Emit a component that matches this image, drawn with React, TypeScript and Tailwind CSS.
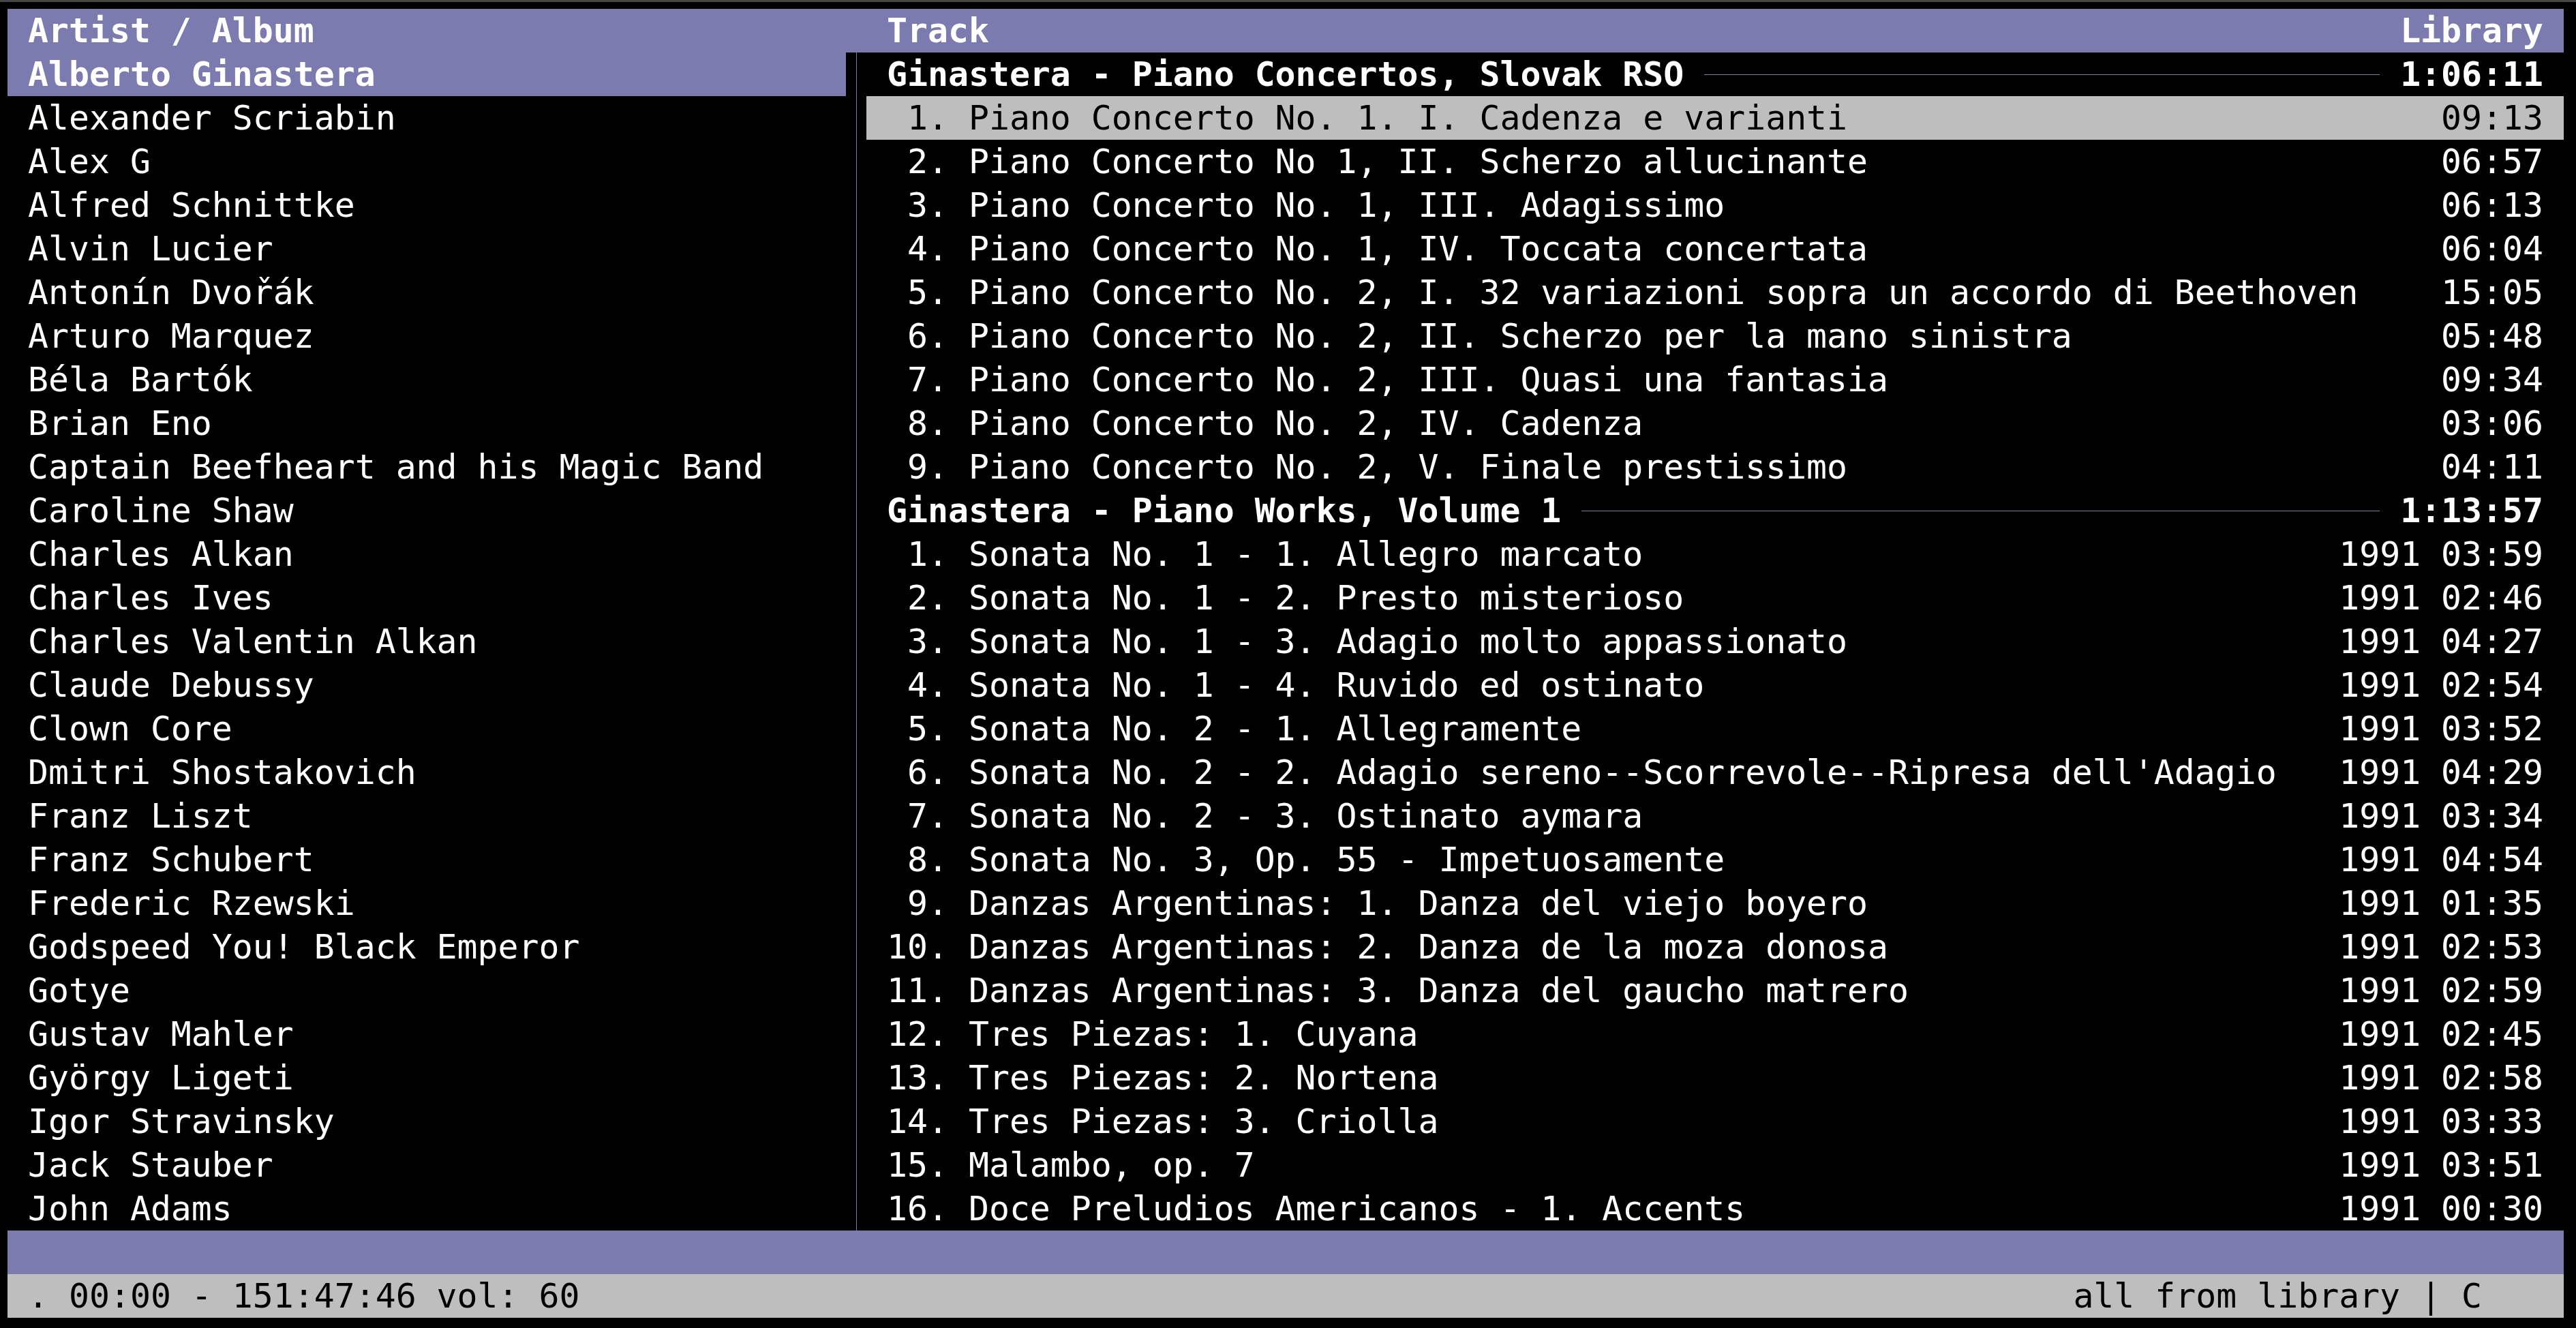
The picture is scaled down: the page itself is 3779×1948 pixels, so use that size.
const PURPLE = 'bg-[#7b7bb0]';

const artists = [
  'Alberto Ginastera',
  'Alexander Scriabin',
  'Alex G',
  'Alfred Schnittke',
  'Alvin Lucier',
  'Antonín Dvořák',
  'Arturo Marquez',
  'Béla Bartók',
  'Brian Eno',
  'Captain Beefheart and his Magic Band',
  'Caroline Shaw',
  'Charles Alkan',
  'Charles Ives',
  'Charles Valentin Alkan',
  'Claude Debussy',
  'Clown Core',
  'Dmitri Shostakovich',
  'Franz Liszt',
  'Franz Schubert',
  'Frederic Rzewski',
  'Godspeed You! Black Emperor',
  'Gotye',
  'Gustav Mahler',
  'György Ligeti',
  'Igor Stravinsky',
  'Jack Stauber',
  'John Adams',
];

type Album = { title: string; total: string; tracks: [string, string][] };

const albums: Album[] = [
  {
    title: 'Ginastera - Piano Concertos, Slovak RSO',
    total: '1:06:11',
    tracks: [
      ['Piano Concerto No. 1. I. Cadenza e varianti', '09:13'],
      ['Piano Concerto No 1, II. Scherzo allucinante', '06:57'],
      ['Piano Concerto No. 1, III. Adagissimo', '06:13'],
      ['Piano Concerto No. 1, IV. Toccata concertata', '06:04'],
      ['Piano Concerto No. 2, I. 32 variazioni sopra un accordo di Beethoven', '15:05'],
      ['Piano Concerto No. 2, II. Scherzo per la mano sinistra', '05:48'],
      ['Piano Concerto No. 2, III. Quasi una fantasia', '09:34'],
      ['Piano Concerto No. 2, IV. Cadenza', '03:06'],
      ['Piano Concerto No. 2, V. Finale prestissimo', '04:11'],
    ],
  },
  {
    title: 'Ginastera - Piano Works, Volume 1',
    total: '1:13:57',
    tracks: [
      ['Sonata No. 1 - 1. Allegro marcato', '1991 03:59'],
      ['Sonata No. 1 - 2. Presto misterioso', '1991 02:46'],
      ['Sonata No. 1 - 3. Adagio molto appassionato', '1991 04:27'],
      ['Sonata No. 1 - 4. Ruvido ed ostinato', '1991 02:54'],
      ['Sonata No. 2 - 1. Allegramente', '1991 03:52'],
      ["Sonata No. 2 - 2. Adagio sereno--Scorrevole--Ripresa dell'Adagio", '1991 04:29'],
      ['Sonata No. 2 - 3. Ostinato aymara', '1991 03:34'],
      ['Sonata No. 3, Op. 55 - Impetuosamente', '1991 04:54'],
      ['Danzas Argentinas: 1. Danza del viejo boyero', '1991 01:35'],
      ['Danzas Argentinas: 2. Danza de la moza donosa', '1991 02:53'],
      ['Danzas Argentinas: 3. Danza del gaucho matrero', '1991 02:59'],
      ['Tres Piezas: 1. Cuyana', '1991 02:45'],
      ['Tres Piezas: 2. Nortena', '1991 02:58'],
      ['Tres Piezas: 3. Criolla', '1991 03:33'],
      ['Malambo, op. 7', '1991 03:51'],
      ['Doce Preludios Americanos - 1. Accents', '1991 00:30'],
    ],
  },
];

function AlbumHeader({ album }: { album: Album }) {
  return (
    <div className="flex h-[64px] items-center px-[30px] font-bold text-white">
      <span className="whitespace-pre">{album.title}</span>
      <div className="mx-[30px] h-px flex-1 bg-[#7b7bb0]" />
      <span>{album.total}</span>
    </div>
  );
}

function TrackRow({ n, title, right, selected }: { n: number; title: string; right: string; selected?: boolean }) {
  return (
    <div
      className={`flex h-[64px] justify-between px-[30px] ${selected ? 'bg-[#bebebe] text-black' : 'text-white'}`}
    >
      <span className="whitespace-pre">{`${String(n).padStart(2, ' ')}. ${title}`}</span>
      <span className="whitespace-pre">{right}</span>
    </div>
  );
}

export default function App() {
  return (
    <div className="h-[1948px] w-[3779px] border-t-[3px] border-[#474747] bg-black pt-[10px] pl-[11px] font-['DejaVu_Sans_Mono',monospace] text-[49.8px] leading-[64px]">
      <div className="flex w-[3750px] flex-col">
        {/* title bar */}
        <div className={`flex h-[64px] font-bold text-white ${PURPLE}`}>
          <div className="w-[1260px] pl-[30px]">Artist / Album</div>
          <div className="flex flex-1 justify-between px-[30px]">
            <span>Track</span>
            <span>Library</span>
          </div>
        </div>

        <div className="flex h-[1728px]">
          <div className="w-[1230px]">
            {artists.map((a, i) => (
              <div
                key={a}
                className={`h-[64px] whitespace-pre pl-[30px] text-white ${i === 0 ? `font-bold ${PURPLE}` : ''}`}
              >
                {a}
              </div>
            ))}
          </div>
          <div className="flex w-[30px] justify-center">
            <div className="w-px bg-[#7b7bb0]" />
          </div>
          <div className="w-[2490px]">
            {albums.map((al, ai) => (
              <div key={al.title}>
                <AlbumHeader album={al} />
                {al.tracks.map(([t, r], i) => (
                  <TrackRow key={t} n={i + 1} title={t} right={r} selected={ai === 0 && i === 0} />
                ))}
              </div>
            ))}
          </div>
        </div>

        <div className={`h-[64px] ${PURPLE}`} />

        <div className="flex h-[64px] justify-between bg-[#bebebe] pr-[120px] pl-[30px] text-black">
          <span className="whitespace-pre">. 00:00 - 151:47:46 vol: 60</span>
          <span className="whitespace-pre">all from library | C</span>
        </div>
      </div>
    </div>
  );
}
